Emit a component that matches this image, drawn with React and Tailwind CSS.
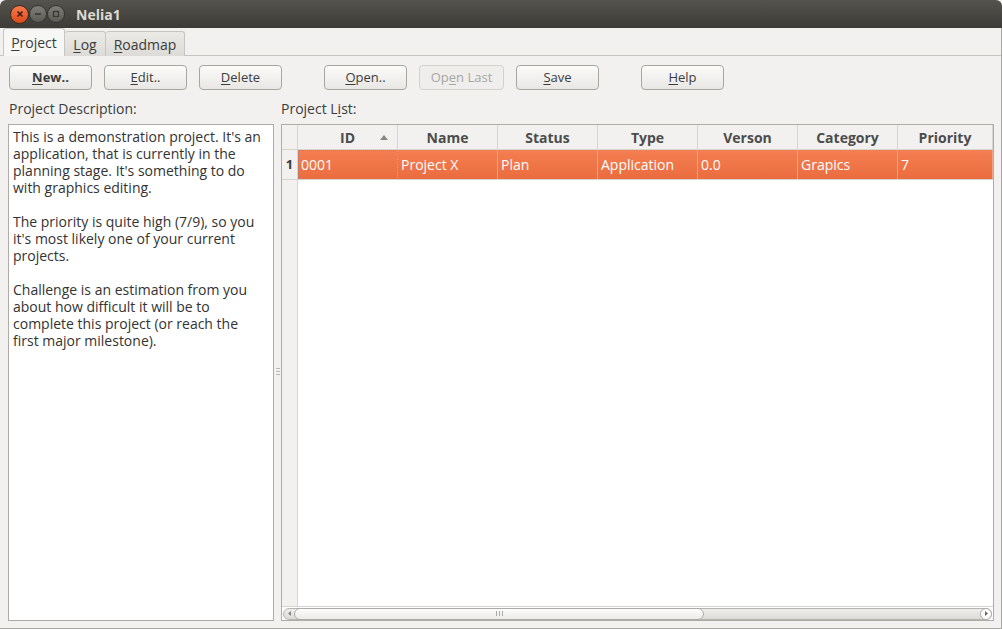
import React from "react";

const font = { fontFamily: "'Open Sans', 'Noto Sans', sans-serif" };

function U({ children }) {
  return <span className="underline underline-offset-2 decoration-1">{children}</span>;
}

function Btn({ children, disabled, className = "" }) {
  return (
    <button
      className={`h-[25px] w-[83px] rounded-[4px] border text-[13px] flex items-center justify-center ${
        disabled
          ? "border-[#d3d1cc] bg-[#efeeec] text-[#a7a6a2]"
          : "border-[#a8a6a0] bg-gradient-to-b from-[#fbfbfa] to-[#e8e7e4] text-[#3c3c3c]"
      } ${className}`}
    >
      {children}
    </button>
  );
}

const columns = ["ID", "Name", "Status", "Type", "Verson", "Category", "Priority"];
const row = ["0001", "Project X", "Plan", "Application", "0.0", "Grapics", "7"];

export default function App() {
  return (
    <div className="w-[1002px] h-[629px] bg-[#f2f1f0] flex flex-col overflow-hidden text-[#3c3c3c]" style={font}>
      {/* title bar */}
      <div className="h-[28px] shrink-0 bg-gradient-to-b from-[#55534d] to-[#3c3b37] rounded-t-[6px] flex items-center pl-[10px]">
        <div className="flex items-center">
          <div className="w-[19px] h-[19px] rounded-full bg-gradient-to-b from-[#f77a4b] to-[#dd4814] border border-[#3a2a22] flex items-center justify-center">
            <svg width="8" height="8" viewBox="0 0 8 8"><path d="M1.5 1.5 L6.5 6.5 M6.5 1.5 L1.5 6.5" stroke="#3a1a0a" strokeWidth="1.5" /></svg>
          </div>
          <div className="w-[18px] h-[18px] rounded-full bg-gradient-to-b from-[#807e78] to-[#5d5b55] border border-[#36352f] flex items-center justify-center">
            <svg width="8" height="8" viewBox="0 0 8 8"><path d="M1 4 H7" stroke="#36352f" strokeWidth="1.5" /></svg>
          </div>
          <div className="w-[18px] h-[18px] rounded-full bg-gradient-to-b from-[#807e78] to-[#5d5b55] border border-[#36352f] flex items-center justify-center">
            <svg width="8" height="8" viewBox="0 0 8 8"><rect x="1.5" y="1.5" width="5" height="5" fill="none" stroke="#36352f" strokeWidth="1.2" /></svg>
          </div>
        </div>
        <span className="ml-[11px] text-[14px] font-bold text-[#dfdbd2]">Nelia1</span>
      </div>

      <div className="flex-1 flex flex-col border-r border-[#a8a6a0] border-b">
        {/* tabs */}
        <div className="flex items-end pl-[3px] pt-[1px] h-[28px] shrink-0 relative">
          <div className="h-[28px] w-[62px] justify-center flex items-center bg-[#f7f7f6] border border-[#c7c5c0] border-b-0 rounded-t-[3px] text-[14px] relative z-10">
            <span><U>P</U>roject</span>
          </div>
          <div className="h-[25px] w-[41px] justify-center flex items-center bg-gradient-to-b from-[#ebeae7] to-[#dcdbd7] border border-[#c7c5c0] border-b-0 border-l-0 rounded-t-[3px] text-[14px]">
            <span><U>L</U>og</span>
          </div>
          <div className="h-[25px] w-[79px] justify-center flex items-center bg-gradient-to-b from-[#ebeae7] to-[#dcdbd7] border border-[#c7c5c0] border-b-0 border-l-0 rounded-t-[3px] text-[14px]">
            <span><U>R</U>oadmap</span>
          </div>
        </div>

        <div className="flex-1 flex flex-col border-t border-[#c7c5c0] bg-[#f2f1f0] -mt-px">
          {/* buttons */}
          <div className="flex items-center pl-[9px] pt-[9px] h-[34px]">
            <Btn className="font-bold"><span><U>N</U>ew..</span></Btn>
            <Btn className="ml-[12px]"><span><U>E</U>dit..</span></Btn>
            <Btn className="ml-[12px]"><span><U>D</U>elete</span></Btn>
            <Btn className="ml-[42px]"><span><U>O</U>pen..</span></Btn>
            <Btn disabled className="ml-[12px] w-[85px]"><span>Op<U>e</U>n Last</span></Btn>
            <Btn className="ml-[12px]"><span><U>S</U>ave</span></Btn>
            <Btn className="ml-[42px]"><span><U>H</U>elp</span></Btn>
          </div>

          {/* main split */}
          <div className="flex flex-1 pl-[8px] pb-[7px] pt-[12px]">
            <div className="w-[267px] flex flex-col">
              <div className="text-[14px] h-[22px] leading-[14px] pl-px">Project Description:</div>
              <div className="flex-1 bg-white border border-[#aeaca7] px-[4px] pt-[3px] text-[14px] leading-[17px] text-[#333]">
                <p>This is a demonstration project. It's an<br />application, that is currently in the<br />planning stage. It's something to do<br />with graphics editing.</p>
                <p className="mt-[17px]">The priority is quite high (7/9), so you<br />it's most likely one of your current<br />projects.</p>
                <p className="mt-[17px]">Challenge is an estimation from you<br />about how difficult it will be to<br />complete this project (or reach the<br />first major milestone).</p>
              </div>
            </div>

            {/* splitter */}
            <div className="w-[7px] flex items-center justify-center">
              <div className="flex flex-col gap-[2px] mt-[20px]">
                <div className="w-[4px] h-px bg-[#b9b7b2]" />
                <div className="w-[4px] h-px bg-[#b9b7b2]" />
                <div className="w-[4px] h-px bg-[#b9b7b2]" />
              </div>
            </div>

            <div className="flex-1 flex flex-col pr-[7px]">
              <div className="text-[14px] h-[22px] leading-[14px]">Project L<U>i</U>st:</div>
              <div className="flex-1 flex flex-col border border-[#aeaca7] bg-white">
                <div className="flex-1 flex">
                  {/* vertical header */}
                  <div className="w-[16px] flex flex-col bg-[#f2f1f0] border-r border-[#d6d4cf]">
                    <div className="h-[25px] border-b border-[#d6d4cf]" />
                    <div className="h-[30px] flex items-center justify-center text-[13px] font-bold border-b border-[#d6d4cf]">1</div>
                  </div>
                  <div className="flex-1 flex flex-col overflow-hidden">
                    <div className="flex h-[25px] bg-[#f2f1f0] border-b border-[#d6d4cf]">
                      {columns.map((c, i) => (
                        <div
                          key={c}
                          className={`${i === 6 ? "w-[95px]" : "w-[100px]"} shrink-0 border-r border-[#d6d4cf] flex items-center justify-center text-[14px] font-bold text-[#4c4c4c] relative`}
                        >
                          {c}
                          {i === 0 && (
                            <svg className="absolute right-[9px] top-[10px]" width="8" height="5" viewBox="0 0 8 5">
                              <path d="M0 5 L4 0 L8 5 Z" fill="#8a8882" />
                            </svg>
                          )}
                        </div>
                      ))}
                    </div>
                    <div className="flex h-[30px] bg-gradient-to-b from-[#f47f52] to-[#ea6c3e] border-b border-[#d6d4cf]">
                      {row.map((v, i) => (
                        <div
                          key={i}
                          className={`${i === 6 ? "w-[95px]" : "w-[100px]"} shrink-0 border-r border-[#e9a88b] flex items-center pl-[3px] text-[14px] text-white ${
                            i === 0 ? "outline outline-1 outline-dotted outline-[#8b8e94] -outline-offset-1" : ""
                          }`}
                        >
                          {v}
                        </div>
                      ))}
                    </div>
                    <div className="flex-1" />
                  </div>
                </div>
                {/* horizontal scrollbar */}
                <div className="h-[14px] flex items-center px-[1px] bg-white border-t border-[#d6d4cf]">
                  <div className="flex-1 h-[12px] rounded-full border border-[#b6b4af] bg-gradient-to-b from-[#efeeec] to-[#dcdbd8] flex items-center relative">
                    <div className="w-[10px] flex items-center justify-center">
                      <svg width="3" height="5" viewBox="0 0 3 5"><path d="M3 0 L0 2.5 L3 5 Z" fill="#888" /></svg>
                    </div>
                    <div className="w-[410px] h-[12px] rounded-full border border-[#aeaca7] bg-gradient-to-b from-[#fdfdfd] to-[#ebeae8] flex items-center justify-center gap-[2px] -my-px">
                      <div className="w-px h-[5px] bg-[#aaa]" />
                      <div className="w-px h-[5px] bg-[#aaa]" />
                      <div className="w-px h-[5px] bg-[#aaa]" />
                    </div>
                    <div className="flex-1" />
                    <div className="w-[12px] h-[12px] rounded-full border border-[#aeaca7] bg-white flex items-center justify-center -my-px -mr-px">
                      <svg width="3" height="5" viewBox="0 0 3 5"><path d="M0 0 L3 2.5 L0 5 Z" fill="#666" /></svg>
                    </div>
                  </div>
                </div>
              </div>
            </div>
          </div>
        </div>
      </div>
    </div>
  );
}
